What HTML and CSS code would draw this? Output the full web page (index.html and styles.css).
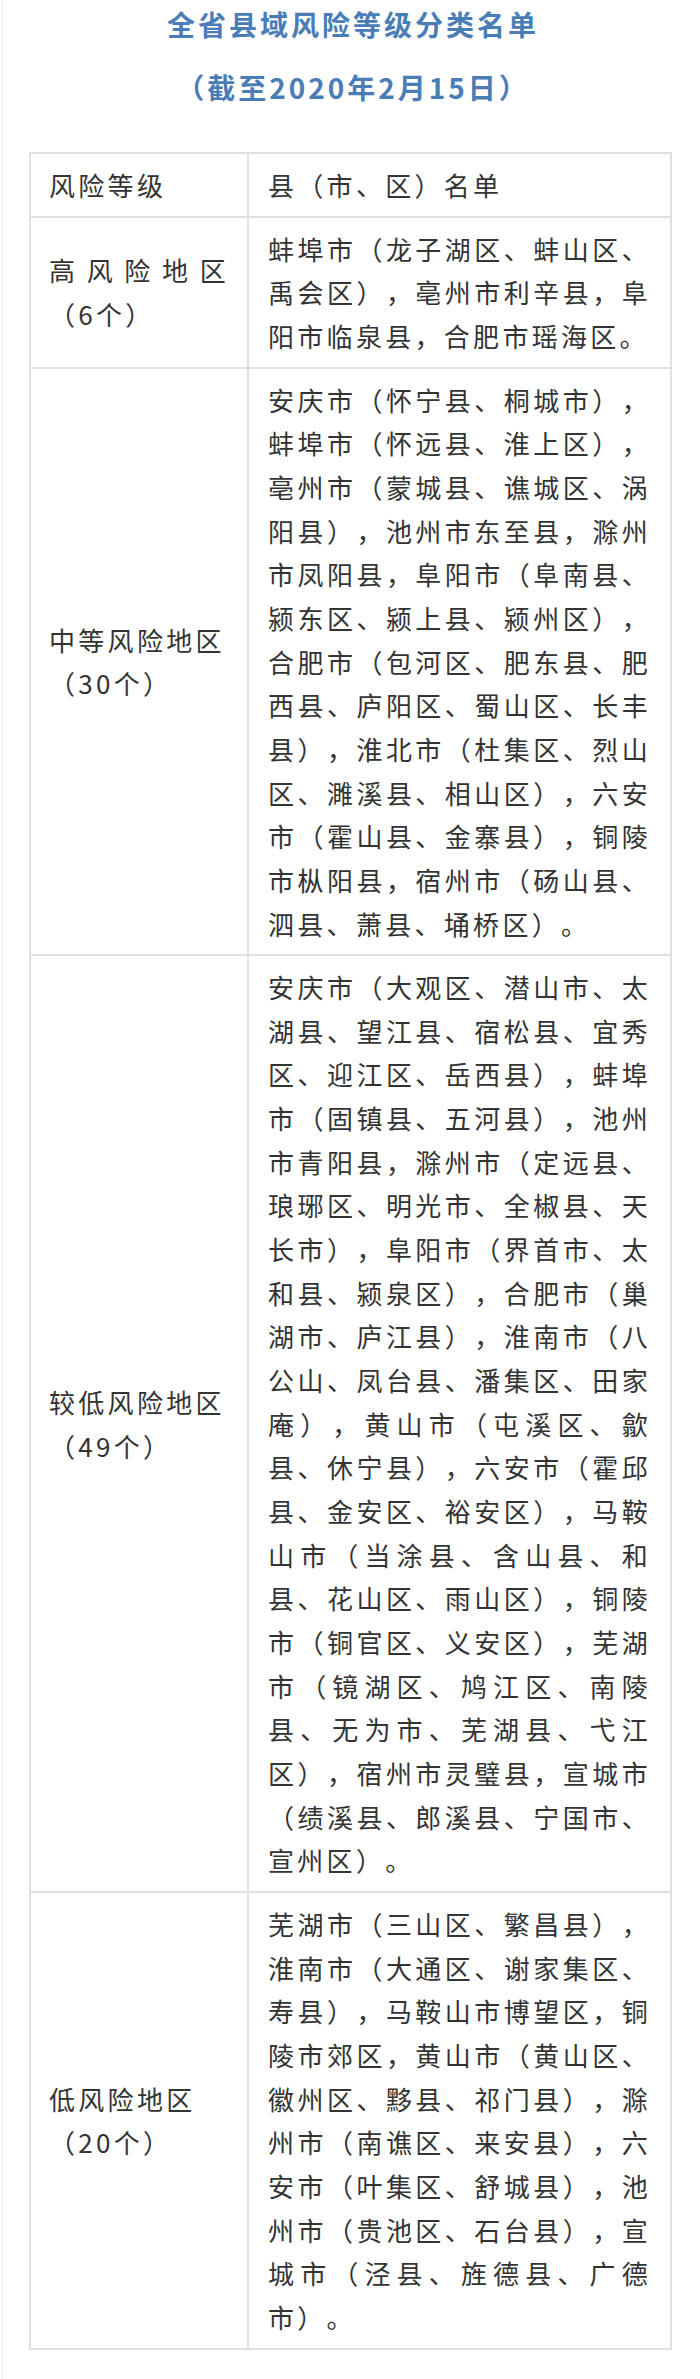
FILE: index.html
```html
<!DOCTYPE html>
<html lang="zh-CN">
<head>
<meta charset="utf-8">
<title>全省县域风险等级分类名单</title>
<link rel="stylesheet" href="styles.css">
</head>
<body>
<div class="page">
  <h1 class="title">
    <span class="title-line">全省县域风险等级分类名单</span>
    <span class="title-line second">（截至2020年2月15日）</span>
  </h1>

  <div class="tbl">
    <div class="cell level">风险等级</div>
    <div class="cell list">县（市、区）名单</div>

    <div class="cell level">
      <span class="ln j">高风险地区</span>
      <span class="ln">（6个）</span>
    </div>
    <div class="cell list">
      <span class="ln j">蚌埠市（龙子湖区、蚌山区、</span>
      <span class="ln j">禹会区），亳州市利辛县，阜</span>
      <span class="ln">阳市临泉县，合肥市瑶海区。</span>
    </div>

    <div class="cell level">
      <span class="ln">中等风险地区</span>
      <span class="ln">（30个）</span>
    </div>
    <div class="cell list">
      <span class="ln j">安庆市（怀宁县、桐城市），</span>
      <span class="ln j">蚌埠市（怀远县、淮上区），</span>
      <span class="ln j">亳州市（蒙城县、谯城区、涡</span>
      <span class="ln j">阳县），池州市东至县，滁州</span>
      <span class="ln j">市凤阳县，阜阳市（阜南县、</span>
      <span class="ln j">颍东区、颍上县、颍州区），</span>
      <span class="ln j">合肥市（包河区、肥东县、肥</span>
      <span class="ln j">西县、庐阳区、蜀山区、长丰</span>
      <span class="ln j">县），淮北市（杜集区、烈山</span>
      <span class="ln j">区、濉溪县、相山区），六安</span>
      <span class="ln j">市（霍山县、金寨县），铜陵</span>
      <span class="ln j">市枞阳县，宿州市（砀山县、</span>
      <span class="ln">泗县、萧县、埇桥区）。</span>
    </div>

    <div class="cell level">
      <span class="ln">较低风险地区</span>
      <span class="ln">（49个）</span>
    </div>
    <div class="cell list">
      <span class="ln j">安庆市（大观区、潜山市、太</span>
      <span class="ln j">湖县、望江县、宿松县、宜秀</span>
      <span class="ln j">区、迎江区、岳西县），蚌埠</span>
      <span class="ln j">市（固镇县、五河县），池州</span>
      <span class="ln j">市青阳县，滁州市（定远县、</span>
      <span class="ln j">琅琊区、明光市、全椒县、天</span>
      <span class="ln j">长市），阜阳市（界首市、太</span>
      <span class="ln j">和县、颍泉区），合肥市（巢</span>
      <span class="ln j">湖市、庐江县），淮南市（八</span>
      <span class="ln j">公山、凤台县、潘集区、田家</span>
      <span class="ln j">庵），黄山市（屯溪区、歙</span>
      <span class="ln j">县、休宁县），六安市（霍邱</span>
      <span class="ln j">县、金安区、裕安区），马鞍</span>
      <span class="ln j">山市（当涂县、含山县、和</span>
      <span class="ln j">县、花山区、雨山区），铜陵</span>
      <span class="ln j">市（铜官区、义安区），芜湖</span>
      <span class="ln j">市（镜湖区、鸠江区、南陵</span>
      <span class="ln j">县、无为市、芜湖县、弋江</span>
      <span class="ln j">区），宿州市灵璧县，宣城市</span>
      <span class="ln j">（绩溪县、郎溪县、宁国市、</span>
      <span class="ln">宣州区）。</span>
    </div>

    <div class="cell level">
      <span class="ln">低风险地区</span>
      <span class="ln">（20个）</span>
    </div>
    <div class="cell list">
      <span class="ln j">芜湖市（三山区、繁昌县），</span>
      <span class="ln j">淮南市（大通区、谢家集区、</span>
      <span class="ln j">寿县），马鞍山市博望区，铜</span>
      <span class="ln j">陵市郊区，黄山市（黄山区、</span>
      <span class="ln j">徽州区、黟县、祁门县），滁</span>
      <span class="ln j">州市（南谯区、来安县），六</span>
      <span class="ln j">安市（叶集区、舒城县），池</span>
      <span class="ln j">州市（贵池区、石台县），宣</span>
      <span class="ln j">城市（泾县、旌德县、广德</span>
      <span class="ln">市）。</span>
    </div>
  </div>
</div>
</body>
</html>
```

FILE: styles.css
```css
html, body {
  margin: 0;
  padding: 0;
  background: #ffffff;
}

body {
  font-family: "Noto Sans CJK SC", "Noto Sans", "Liberation Sans", sans-serif;
  color: #333333;
  text-spacing-trim: space-all;
  text-autospace: no-autospace;
}

.page {
  margin-left: 2px;
  border-left: 1px solid #ececec;
  min-height: 2379px;
  box-sizing: border-box;
  padding-top: 0;
}

.title {
  margin: 0;
  padding-left: 3px;
  color: #4a7db6;
  font-size: 28px;
  font-weight: 700;
  letter-spacing: 3px;
  text-align: center;
}

.title-line {
  display: block;
  line-height: 48px;
}

.title-line.second {
  margin-top: 15px;
}

.tbl {
  display: grid;
  grid-template-columns: 218px 423px;
  width: 643px;
  box-sizing: border-box;
  margin: 41px 0 0 26px;
  border-top: 2px solid #e0e0e0;
  border-left: 2px solid #e0e0e0;
  font-size: 26px;
  line-height: 43.65px;
  letter-spacing: 3.3px;
}

.cell {
  border-right: 2px solid #e0e0e0;
  border-bottom: 2px solid #e0e0e0;
  padding: 9px 18px;
  min-width: 0;
}

.cell.level {
  display: flex;
  flex-direction: column;
  justify-content: center;
}

.cell.list {
  padding: 9px 19px;
}

.ln {
  display: block;
}

.ln.j {
  text-align: justify;
  text-align-last: justify;
}
```
